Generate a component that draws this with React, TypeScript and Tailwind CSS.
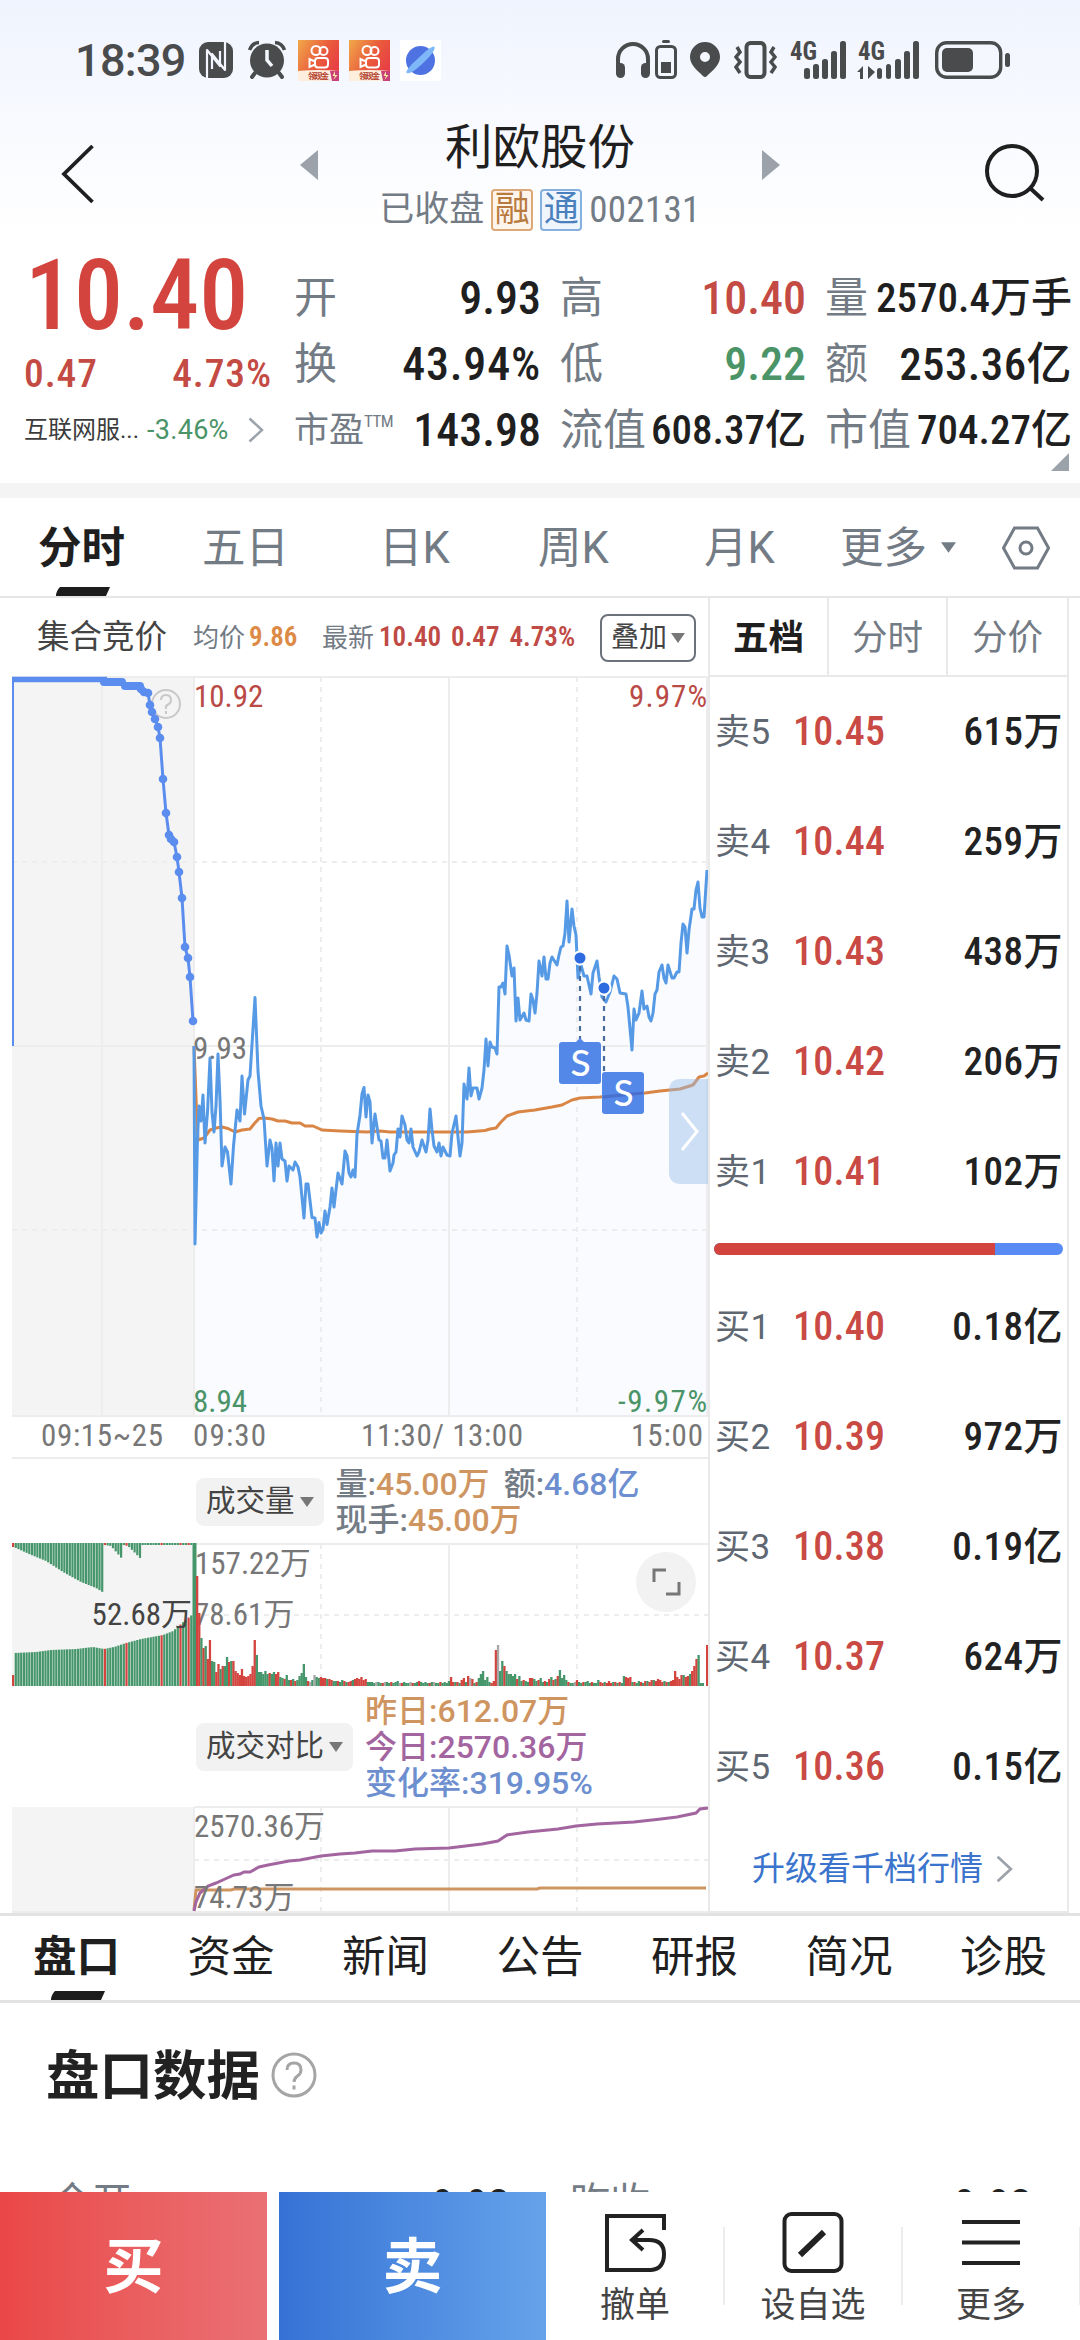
import clsx from "clsx";
import type { ReactNode } from "react";

type Point = [number, number];

const toPath = (points: Point[]) => "M" + points.map((p) => p.join(" ")).join("L");

const PRICE: Point[] = [
  [194, 1046], [195, 1244], [197.5, 1138], [199, 1106], [201, 1121], [203, 1095], [205, 1143], [207.5, 1112],
  [210, 1058], [212, 1112], [214, 1132], [216, 1106], [218, 1054], [220, 1100], [222, 1166], [225, 1147],
  [227.5, 1152], [231, 1184], [233.5, 1146], [237, 1110], [240, 1121], [242, 1076], [244.5, 1114], [248, 1080],
  [250, 1076], [255, 997.5], [258, 1071], [261, 1106], [264, 1119], [267, 1166], [270, 1140], [272, 1148],
  [274, 1181], [276, 1143], [278, 1166], [280, 1143], [282, 1159], [285, 1161], [287, 1181], [289, 1166],
  [293, 1170], [295, 1162], [298, 1167], [300, 1177], [304, 1218], [306, 1184], [308, 1184], [312, 1217.5],
  [315, 1218], [317, 1237], [319, 1222.5], [321, 1233], [323, 1229], [325, 1211], [327, 1224.5], [330, 1207],
  [332, 1188], [334, 1207], [338, 1173], [342, 1184], [345, 1151], [347, 1155.5], [349, 1173], [351, 1177],
  [353, 1170], [355, 1177], [357, 1134.5], [360, 1115], [362, 1094], [364, 1087.5], [366, 1117], [368, 1095],
  [370, 1102], [372, 1143], [375, 1114], [379, 1140], [381, 1141], [383, 1158], [385, 1158], [387, 1140],
  [390, 1171], [393, 1163], [394, 1155], [396, 1152], [398, 1129], [400, 1137], [402, 1116], [405, 1125],
  [407, 1140], [409, 1143], [411, 1129], [413, 1147], [417, 1156], [419, 1152], [422, 1140], [426, 1152],
  [428, 1140], [430, 1109], [432, 1130], [434, 1146], [437, 1152], [439, 1143], [441, 1156], [443, 1147],
  [447, 1155], [450, 1156], [452, 1133], [456, 1116], [458, 1137], [460, 1156], [462, 1143], [464, 1084],
  [467, 1099], [469, 1068], [471, 1096], [473, 1088], [477, 1088], [479, 1099], [482, 1088], [484, 1070],
  [486, 1039], [488, 1066], [490, 1042], [492, 1047], [495, 1048], [497, 1054], [499, 987], [501, 987],
  [503, 983], [505, 994], [507, 946], [509, 955], [512, 976], [514, 968], [516, 1021], [518, 998],
  [520, 1020], [524, 1013], [526, 1020], [529, 1021], [531, 994], [533, 1000], [535, 1013], [537, 993],
  [539, 961], [542, 976], [544, 957], [546, 979], [548, 979], [550, 963], [552, 957], [557, 965],
  [559, 955], [561, 947], [563, 946], [565, 933], [567, 901], [569, 942], [572, 909], [574, 926],
  [576, 935], [578, 978], [581, 965], [584, 976], [587, 976], [591, 994], [593, 973], [597, 961],
  [599, 977], [602, 997], [606, 1002], [610, 992], [614, 976], [617, 979], [620, 993], [626, 994],
  [628, 1007], [632, 1050], [634, 1009], [636, 1020], [639, 1013], [642, 991], [644, 1009], [647, 1006],
  [649, 1017], [651, 1021], [653, 1013], [655, 994], [657, 990], [659, 972], [662, 965], [664, 978],
  [666, 983], [668, 965], [672, 978], [674, 978], [677, 972], [679, 972], [681, 943], [683, 924],
  [685, 927], [687, 953], [689, 930], [692, 909], [694, 909], [696, 890], [698, 882], [700, 908],
  [702, 917], [704, 917], [707, 870],
];

const AVERAGE: Point[] = [
  [194, 1046], [196.5, 1110], [198, 1140], [204, 1138], [210, 1130], [216, 1128], [222, 1127], [228, 1128.5],
  [235, 1132], [242, 1130], [250, 1129], [254, 1124], [259, 1118.5], [264, 1118], [272, 1119], [278, 1121],
  [285, 1121], [292, 1123], [300, 1123], [305, 1126], [313, 1126], [322, 1130], [340, 1131], [367, 1132],
  [380, 1131], [390, 1132], [467, 1132], [485, 1130.5], [490, 1129], [496, 1128], [501, 1122], [507, 1116],
  [518, 1112], [535, 1110], [552, 1107], [562, 1105], [572, 1100], [580, 1098], [600, 1097], [620, 1095],
  [645, 1093], [660, 1091], [680, 1089], [693, 1085], [699, 1077], [704, 1076], [708, 1073],
];

const AUCTION: Point[] = [
  [141, 689], [144, 692], [148, 693], [150, 705], [152, 712], [155, 719], [158, 727], [160, 738],
  [163, 779], [166, 813], [169, 835], [171, 839], [174, 842], [177, 857], [179, 872], [182, 898],
  [185, 947], [188, 958], [190, 977], [193, 1021],
];

const TODAY: Point[] = [
  [194, 1911], [196, 1902], [200, 1893], [208, 1886], [216, 1883], [225, 1879], [234, 1875], [240, 1874],
  [244, 1872], [250, 1872], [259, 1867], [268, 1865], [289, 1861], [300, 1860], [321, 1856], [340, 1854],
  [355, 1853], [372, 1851], [395, 1851], [415, 1849], [449, 1848], [482, 1844], [498, 1841], [507, 1835],
  [528, 1832], [558, 1829], [576, 1826], [597, 1824], [634, 1822], [661, 1819], [677, 1817], [696, 1813],
  [700, 1809], [708, 1808],
];

const YESTERDAY: Point[] = [
  [194, 1910], [196, 1890], [231, 1890], [234, 1889], [537, 1889], [540, 1888], [706, 1888],
];

// one entry per traded minute: height, then g / r / n for the colour
const VOLUME =
  "110r 73r 48g 38r 40g 27r 46r 25g 24g 14r 22r 17g 20r 20g 29g 24r 25g 25r 15r 13r 11r 17r 10r 9r 10r 12r 20r 46r 31g 14g 14g 12g 15g 12g 13r 12g 14g 12r 14r 9g 8g 7r 11g 6g 6r 7g 5r 6g 10g 13g 22g 9g 5r 4n 6g 11n 9g 8g 9r 8r 8r 7g 7r 6r 5g 5g 5r 4g 6g 5r 4g 4r 5r 6g 7r 8r 7r 9r 6r 7r 4g 4g 4g 3g 4n 4g 3g 3r 4n 4g 3g 4r 3g 4g 5g 3n 3r 4g 3g 3g 4n 3r 3g 4g 5r 4g 3g 4g 3g 3r 4g 4n 3g 3g 4r 3g 4g 3g 5g 9r 4r 4g 4r 3g 6r 8r 4g 10r 8n 7r 3g 4r 8g 12g 15g 6g 9g 4g 3r 5r 36r 41n 15g 25g 20r 15g 12g 12g 10g 12g 7r 10g 5g 6r 5g 4g 8r 8r 7g 5g 6r 8g 4g 5r 4g 7r 9g 6r 7g 10r 16g 8g 11g 6g 4r 3g 3g 4n 6r 4g 3g 4r 4g 5g 3g 4r 3g 3g 6g 4r 3r 4g 3r 5r 3r 4g 4r 3g 4r 3g 10g 9r 8r 9r 4g 4r 3g 5g 4r 3g 5r 5g 4r 6r 6g 5r 7r 6r 4r 5g 4r 4g 5r 6r 15r 9r 7r 11r 11g 9r 10r 12g 15r 20r 27r 31g 3g 3g 0g 41r"
    .split(" ")
    .map((v, i, all) => ({ x: 196 + (i * 510) / (all.length - 1), h: parseInt(v, 10), tone: v.slice(-1) }));

const lerp = (points: Point[], x: number) => {
  const i = Math.max(1, points.findIndex((p) => p[0] >= x));
  const [x0, y0] = points[i - 1];
  const [x1, y1] = points[i];
  return y0 + ((y1 - y0) * (x - x0)) / (x1 - x0);
};

const AUCTION_TOP: Point[] = [
  [12, 1547], [15, 1548], [28, 1554], [45, 1561], [62, 1572], [80, 1582], [95, 1588], [103, 1593], [103.5, 1545],
  [110, 1546], [122, 1560], [122.5, 1545], [127, 1546], [139, 1558], [139.5, 1545], [192, 1545],
];
const AUCTION_BASE: Point[] = [
  [12, 1675], [13, 1653], [35, 1652], [50, 1650], [75, 1649], [92, 1647], [103, 1649], [113, 1647], [125, 1643],
  [140, 1639], [162, 1635], [172, 1631], [180, 1624], [187, 1618], [192, 1614],
];
const AUCTION_BARS = Array.from({ length: 67 }, (_, i) => {
  const x = 12 + i * 2.7;
  return { x, top: lerp(AUCTION_TOP, x), base: lerp(AUCTION_BASE, x), red: [0, 34, 42, 55, 62, 65].includes(i) };
});

const SELLS = [
  ["卖5", "10.45", "615万"],
  ["卖4", "10.44", "259万"],
  ["卖3", "10.43", "438万"],
  ["卖2", "10.42", "206万"],
  ["卖1", "10.41", "102万"],
];
const BUYS = [
  ["买1", "10.40", "0.18亿"],
  ["买2", "10.39", "972万"],
  ["买3", "10.38", "0.19亿"],
  ["买4", "10.37", "624万"],
  ["买5", "10.36", "0.15亿"],
];

function Caret({ className }: { className?: string }) {
  return (
    <svg viewBox="0 0 14 10" className={clsx("h-2.5 w-3.5 fill-current", className)}>
      <path d="M0 0H14L7 10Z" />
    </svg>
  );
}

function ChevronRight({ className }: { className?: string }) {
  return (
    <svg viewBox="0 0 16 26" fill="none" stroke="currentColor" strokeWidth="2.5" className={className}>
      <path d="M1.5 1.5L14 13L1.5 24.5" />
    </svg>
  );
}

function AppBadge() {
  return (
    <svg viewBox="0 0 41 41" className="h-[41px] w-[41px] overflow-visible">
      <defs>
        <linearGradient id="badge" x1="0" y1="0" x2="1" y2="0.6">
          <stop offset="0" stopColor="#f0a94a" />
          <stop offset="0.6" stopColor="#ea5a3c" />
          <stop offset="1" stopColor="#e73f45" />
        </linearGradient>
      </defs>
      <path d="M0 0H41V41H0Z" fill="url(#badge)" />
      <g fill="none" stroke="#fff" strokeWidth="2">
        <circle cx="18" cy="10.5" r="4.5" />
        <circle cx="25.5" cy="11" r="4" />
        <rect x="17" y="18" width="13" height="9.5" rx="3" />
        <path d="M17 21.5L11.5 19V27L17 24.5" />
      </g>
      <path d="M0 31Q20 29 41 31V41H0Z" fill="#fdeedd" />
      <path d="M32 31H41V41H34Z" fill="#c8407a" />
      <path d="M37 31L34.5 36H37L35.5 40L39.5 35H37Z" fill="#ffe9a0" />
      <text x="10" y="39" fontSize="8" fontWeight="700" fill="#b3402c" textLength="21">
        领现金
      </text>
    </svg>
  );
}

function StatusBar() {
  return (
    <div className="flex h-[120px] items-center pl-[75px] text-[#4a4b4d]">
      <span className="w-[124px] text-[45px] leading-none font-medium tracking-[-0.7px] font-stretch-[100%]">18:39</span>
      <svg viewBox="0 0 34 36" className="h-9 w-[34px]">
        <rect width="34" height="36" rx="9" fill="currentColor" />
        <g fill="none" stroke="#f3f6fe" strokeWidth="2.2" strokeLinejoin="round">
          <path d="M8 36V8L21 24V9" />
          <path d="M26 0V28L13 12V27" />
        </g>
      </svg>
      <svg viewBox="0 0 38 38" className="ml-[15px] h-[38px] w-[38px] overflow-visible">
        <circle cx="19" cy="19.5" r="17" fill="currentColor" />
        <path d="M1.500 9Q4 2 11 1.500M36.500 9Q34 2 27 1.500" fill="none" stroke="currentColor" strokeWidth="3.500" />
        <path d="M7 32L4 36M31 32L34 36" stroke="currentColor" strokeWidth="4" strokeLinecap="round" />
        <path d="M19 9V19L24 25" fill="none" stroke="#f4f7fe" strokeWidth="3.5" />
      </svg>
      <div className="ml-[12px] flex gap-[10px]">
        <AppBadge />
        <AppBadge />
        <svg viewBox="0 0 41 41" className="h-[41px] w-[41px]">
          <path d="M0 0H41V41H0Z" fill="#fff" />
          <circle cx="20.500" cy="20.500" r="14.500" fill="#4f72e2" />
          <path d="M7 33Q4 33 12 24L26 11Q36 3 34.500 9Q33 14 21 25Q10 35 7 33Z" fill="#7fb8f8" />
        </svg>
      </div>
      <div className="ml-[174px] flex items-center">
        <svg viewBox="0 0 64 40" className="h-10 w-16" fill="none" stroke="currentColor">
          <path d="M3 27V19A15 15 0 0 1 33 19V27" strokeWidth="4" />
          <rect x="1" y="23" width="9" height="15" rx="4.500" fill="currentColor" stroke="none" />
          <rect x="26" y="23" width="9" height="15" rx="4.500" fill="currentColor" stroke="none" />
          <rect x="41.500" y="6.500" width="19" height="31" rx="4" strokeWidth="3" />
          <rect x="47" y="0" width="8" height="3" rx="1.500" fill="currentColor" stroke="none" />
          <rect x="46" y="22" width="10" height="11" fill="currentColor" stroke="none" />
        </svg>
        <svg viewBox="0 0 30 36" className="ml-[11px] h-9 w-[30px]" fill="currentColor">
          <path
            fillRule="evenodd"
            d="M15 0A15 15 0 0 1 30 15C30 23 22 29 17 34Q15 36 13 34C8 29 0 23 0 15A15 15 0 0 1 15 0ZM15 10A5 5 0 1 0 15 20A5 5 0 0 0 15 10Z"
          />
        </svg>
        <svg viewBox="0 0 43 38" className="ml-[14px] h-[38px] w-[43px]" fill="none" stroke="currentColor" strokeWidth="3.5">
          <rect x="12.500" y="2" width="18" height="34" rx="4" strokeWidth="4" />
          <path d="M3 6L6 11L2 16L6 21L2 26L6 32M40 6L37 11L41 16L37 21L41 26L37 32" />
        </svg>
        <svg viewBox="0 0 130 38" className="ml-[13px] h-[38px] w-[130px] overflow-visible" fill="currentColor">
          <text x="0" y="19" fontSize="26" fontWeight="700" textLength="27" lengthAdjust="spacingAndGlyphs">4G</text>
          <rect x="14" y="27" width="6" height="11" rx="2.500" />
          <rect x="23" y="23" width="6" height="15" rx="2.500" />
          <rect x="32" y="18" width="6" height="20" rx="2.500" />
          <rect x="41" y="10" width="6" height="28" rx="2.500" />
          <rect x="50" y="0" width="6" height="38" rx="2.500" />
          <text x="68" y="19" fontSize="26" fontWeight="700" textLength="27" lengthAdjust="spacingAndGlyphs">4G</text>
          <path d="M67 31L73 25V38H70V31ZM78 25L85 31L78 38Z" />
          <rect x="87" y="27" width="5" height="11" rx="2.500" />
          <rect x="96" y="23" width="5" height="15" rx="2.500" />
          <rect x="105" y="18" width="6" height="20" rx="2.500" />
          <rect x="114" y="10" width="6" height="28" rx="2.500" />
          <rect x="123" y="0" width="6" height="38" rx="2.500" />
        </svg>
        <svg viewBox="0 0 76 38" className="ml-[15px] h-[38px] w-[76px]">
          <rect x="1.700" y="1.700" width="64" height="34.600" rx="10" fill="none" stroke="currentColor" strokeWidth="3.400" />
          <rect x="7" y="7" width="31" height="24" rx="5" fill="currentColor" />
          <rect x="70" y="12" width="5" height="14" rx="2.500" fill="currentColor" />
        </svg>
      </div>
    </div>
  );
}

function Header() {
  return (
    <header className="flex h-[115px] items-start text-[#1f1f1f]">
      <svg viewBox="0 0 34 60" className="mt-6 ml-[61px] h-[60px] w-[34px]" fill="none" stroke="currentColor" strokeWidth="3.800">
        <path d="M31.500 2L3 30L31.500 58" />
      </svg>
      <svg viewBox="0 0 18 30" className="mt-[30px] ml-[205px] h-[30px] w-[18px] fill-[#9ba2aa]">
        <path d="M18 0V30L0 15Z" />
      </svg>
      <div className="flex w-[444px] flex-col items-center">
        <h1 className="mt-[4px] text-[47.500px] leading-[48px]">利欧股份</h1>
        <div className="mt-[17px] flex items-center gap-[7px] text-[35px] leading-[42px] text-[#737b85]">
          <span>已收盘</span>
          <span className="size-[42px] rounded border-2 border-[#dca878] bg-[#fdf5ec] text-center leading-[37px] text-[#b97a3f]">融</span>
          <span className="size-[42px] rounded border-2 border-[#86b0de] bg-[#eef5fd] text-center leading-[37px] text-[#4a80bd]">通</span>
          <span className="text-[37px] tracking-[0.3px]">002131</span>
        </div>
      </div>
      <svg viewBox="0 0 18 30" className="mt-[30px] h-[30px] w-[18px] fill-[#9ba2aa]">
        <path d="M0 0V30L18 15Z" />
      </svg>
      <svg viewBox="0 0 62 60" className="mt-[23px] ml-[204px] h-[60px] w-[62px]" fill="none" stroke="currentColor" strokeWidth="4">
        <circle cx="28" cy="28" r="25" />
        <path d="M46 45L59 57" />
      </svg>
    </header>
  );
}

function Stat({ label, value, className }: { label: ReactNode; value: string; className?: string }) {
  return (
    <div className="flex h-[66px] items-center justify-between leading-none whitespace-nowrap">
      <span className="text-[43px] text-[#737b85]">{label}</span>
      <span className={clsx("font-medium", className)}>{value}</span>
    </div>
  );
}

function Quote() {
  return (
    <section className="relative flex h-[248px]">
      <div className="ml-6 w-[248px]">
        <div className="mt-[12px] ml-px text-[98px] leading-[98px] font-medium text-[#d2443d]">10.40</div>
        <div className="mt-[9px] flex justify-between text-[39.500px] leading-[40px] font-medium tracking-[0.9px] text-[#c44a44]">
          <span>0.47</span>
          <span>4.73%</span>
        </div>
        <div className="mt-[24px] flex h-6 items-center text-2xl leading-none whitespace-nowrap">
          <span className="w-[123px] text-[#3c3c3c]">互联网服...</span>
          <span className="text-[27px] tracking-[0.3px] text-[#4a9468] font-stretch-[95%]">-3.46%</span>
          <ChevronRight className="mr-[8px] ml-auto h-[26px] w-4 text-[#9ba2aa]" />
        </div>
      </div>
      <div className="mt-[30px] ml-[22px] w-[247px]">
        <Stat label="开" value="9.93" className="text-[46px]" />
        <Stat label="换" value="43.94%" className="text-[46px] tracking-[0.8px]" />
        <Stat
          label={<span className="flex items-start text-[35px]">市盈<small className="text-[17px] leading-4 tracking-[-0.5px]">TTM</small></span>}
          value="143.98"
          className="text-[46px]"
        />
      </div>
      <div className="mt-[30px] ml-[19px] w-[246px]">
        <Stat label="高" value="10.40" className="text-[46px] text-[#c44a44]" />
        <Stat label="低" value="9.22" className="text-[46px] text-[#4a9468]" />
        <Stat label="流值" value="608.37亿" className="text-[41px]" />
      </div>
      <div className="mt-[30px] ml-[19px] w-[247px]">
        <Stat label="量" value="2570.4万手" className="text-[41px]" />
        <Stat label="额" value="253.36亿" className="text-[45px] tracking-[0.4px]" />
        <Stat label="市值" value="704.27亿" className="text-[41px]" />
      </div>
      <svg viewBox="0 0 18 18" className="absolute right-[11px] bottom-[12px] size-[18px] fill-[#9ba2aa]">
        <path d="M18 0V18H0Z" />
      </svg>
    </section>
  );
}

function Underline() {
  return (
    <svg viewBox="0 0 54 9" className="absolute bottom-0 left-[18px] h-[9px] w-[54px] fill-[#1c1c1c]">
      <path d="M4 0H54L50 9H0Q0 4 4 0Z" />
    </svg>
  );
}

function PeriodTabs() {
  return (
    <nav className="flex h-[100px] items-center border-b-2 border-[#e6e6e6] pt-[4px] pl-[38px] text-[43.500px] leading-none text-[#737b85] font-stretch-[100%]">
      <span className="relative flex h-full w-[164px] items-center font-bold text-[#1f1f1f]">
        分时
        <Underline />
      </span>
      <span className="w-[177px]">五日</span>
      <span className="w-[159px]">日K</span>
      <span className="w-[166px]">周K</span>
      <span className="w-[136px]">月K</span>
      <span>更多</span>
      <Caret className="mb-[3px] ml-[14px] h-[13px] w-[15px]" />
      <svg viewBox="0 0 48 44" className="mb-[3px] ml-[46px] h-11 w-12" fill="none" stroke="currentColor" strokeWidth="3">
        <path d="M12.500 2H35.500L46.500 22L35.500 42H12.500L1.500 22Z" />
        <circle cx="24" cy="22" r="6" />
      </svg>
    </nav>
  );
}

function ChartLegend() {
  return (
    <div className="flex h-[78px] items-center pt-px pl-[25px] leading-none whitespace-nowrap">
      <span className="w-[156px] text-[32.500px] text-[#444]">集合竞价</span>
      <span className="text-[26px] text-[#737b85]">均价</span>
      <span className="ml-[4px] w-[73px] text-[27px] font-semibold text-[#dd8a46]">9.86</span>
      <span className="text-[26px] text-[#737b85]">最新</span>
      <div className="ml-[5px] flex gap-[10px] text-[27px] font-semibold text-[#c04a45]">
        <span>10.40</span>
        <span>0.47</span>
        <span>4.73%</span>
      </div>
      <button className="mr-[12px] ml-auto flex h-12 w-[96px] items-center justify-center gap-1 rounded-lg border-2 border-[#6b727a] text-[28px] text-[#444]">
        叠加
        <Caret className="text-[#777]" />
      </button>
    </div>
  );
}

function PriceChart() {
  return (
    <svg viewBox="12 676 697 781" className="block h-[781px] w-[697px]">
      <path d="M12 677H194V1416H12Z" fill="#f4f4f4" />
      <path d={`${toPath(PRICE)}V1416H194Z`} fill="#f9fbfe" />
      <g stroke="#ededee" strokeWidth="2" fill="none">
        <path d="M12 677H708M12 1046H708M12 1416H708M102 677V1416M194 677V1416M449 677V1416M707 677V1416" />
        <path d="M321 677V1416M577 677V1416M12 862H708M12 1230H708" strokeDasharray="5 5" />
      </g>
      <g fill="none" stroke="#c8c8c8" strokeWidth="2">
        <circle cx="166" cy="704" r="14" />
        <path d="M161 700Q161 695 166 695T171 700Q171 703 168 704.500T166 709M166 711V714" />
      </g>
      <g fill="none" stroke="#5b8def" strokeLinejoin="round" strokeLinecap="round">
        <path d="M13 1046V679" strokeWidth="2" strokeLinecap="butt" />
        <path d="M12 679.500H107" strokeWidth="5.500" strokeLinecap="butt" />
        <path d="M104 682H122M125 686H140" strokeWidth="8" />
        <path d={toPath([[138, 687], ...AUCTION])} strokeWidth="3" />
      </g>
      {AUCTION.map(([x, y]) => (
        <circle key={y} cx={x} cy={y} r="4.300" fill="#5b8def" />
      ))}
      <g fontSize="31" fill="#777">
        <text x="194" y="707" fill="#b94a46">10.92</text>
        <text x="707" y="707" fill="#b94a46" textAnchor="end" textLength="78">9.97%</text>
        <text x="193" y="1059">9.93</text>
        <text x="193" y="1412" fill="#4a9468">8.94</text>
        <text x="707" y="1412" fill="#4a9468" textAnchor="end" textLength="89">-9.97%</text>
        <text x="41" y="1446" textLength="122">09:15~25</text>
        <text x="193" y="1446" textLength="73">09:30</text>
        <text x="361" y="1446" textLength="162">11:30/ 13:00</text>
        <text x="703" y="1446" textAnchor="end" textLength="72">15:00</text>
      </g>
      <path d={toPath(AVERAGE)} fill="none" stroke="#d98546" strokeWidth="3" strokeLinejoin="round" />
      <path d={toPath(PRICE)} fill="none" stroke="#569ae6" strokeWidth="3" strokeLinejoin="round" />
      <path d="M580 966V1040M604 996V1072" stroke="#4a6c9c" strokeWidth="2.200" strokeDasharray="5 5" />
      <circle cx="580" cy="958" r="6.500" fill="#2f6be0" stroke="#fff" strokeWidth="2" />
      <circle cx="604" cy="988" r="6.500" fill="#2f6be0" stroke="#fff" strokeWidth="2" />
      <path d="M575 1043L580 1038L585 1043Z" fill="#5488e8" />
      <rect x="559" y="1042" width="42" height="42" rx="3" fill="#5488e8" />
      <rect x="602" y="1072" width="42" height="42" rx="3" fill="#5488e8" />
      <path d="M603 1097L643 1093" stroke="#4a6fcc" strokeWidth="3" />
      <g fontSize="37" fontWeight="500" fill="#fff" textAnchor="middle" fontFamily="Lato">
        <text x="580.500" y="1076">S</text>
        <text x="623.500" y="1106">S</text>
      </g>
      <path d="M709 1079H681Q669 1079 669 1091V1172Q669 1184 681 1184H709Z" fill="#96bdec" fillOpacity="0.45" />
      <path d="M682 1113L697 1131.500L682 1150" fill="none" stroke="#fff" strokeWidth="3" />
    </svg>
  );
}

const TONES: Record<string, string> = { g: "#46966b", r: "#d2443d", n: "#a8a8a8" };

function VolumeChart() {
  return (
    <svg viewBox="12 1543 697 143" className="block h-[143px] w-[697px]">
      <path d="M12 1543H194V1686H12Z" fill="#f4f4f4" />
      <g stroke="#ededee" strokeWidth="2" fill="none">
        <path d="M12 1544H708M449 1544V1686" />
        <path d="M321 1544V1686M577 1544V1686M194 1615H708" strokeDasharray="5 5" />
      </g>
      <g fontSize="31" fill="#777">
        <text x="195" y="1574">157.22万</text>
        <text x="194" y="1625">78.61万</text>
      </g>
      {AUCTION_BARS.map((bar) => (
        <g key={bar.x} fill={bar.red ? TONES.r : TONES.g}>
          <rect x={bar.x} y="1543" width="2.200" height={bar.top - 1543} />
          <rect x={bar.x} y={bar.base} width="2.200" height={1686 - bar.base} />
        </g>
      ))}
      <path d="M192.500 1543H196.500V1686H192.500Z" fill={TONES.g} />
      {VOLUME.map((bar) => (
        <rect key={bar.x} x={bar.x} y={1686 - bar.h} width="2.300" height={bar.h} fill={TONES[bar.tone]} />
      ))}
      <text x="192" y="1625" fontSize="31" fill="#444" textAnchor="end">52.68万</text>
      <circle cx="666" cy="1582" r="30" fill="#f2f2f2" />
      <path d="M654 1582V1570H666M679 1582V1594H666" fill="none" stroke="#777" strokeWidth="3" />
    </svg>
  );
}

function CompareChart() {
  return (
    <svg viewBox="12 1806 697 107" className="block h-[107px] w-[697px] overflow-visible">
      <path d="M12 1807H194V1912H12Z" fill="#f4f4f4" />
      <g stroke="#ededee" strokeWidth="2" fill="none">
        <path d="M194 1807H708M12 1912H708M194 1807V1912M449 1807V1912" />
        <path d="M321 1807V1912M577 1807V1912M194 1860H708" strokeDasharray="5 5" />
      </g>
      <path d={toPath(YESTERDAY)} fill="none" stroke="#cf9561" strokeWidth="3" />
      <path d={toPath(TODAY)} fill="none" stroke="#a3659f" strokeWidth="3" />
      <g fontSize="31" fill="#777">
        <text x="194" y="1837" textLength="131">2570.36万</text>
        <text x="194" y="1908">74.73万</text>
      </g>
    </svg>
  );
}

function Chip({ children }: { children: ReactNode }) {
  return (
    <span className="ml-[184px] flex h-12 items-center gap-[5px] rounded-lg bg-[#f2f2f2] px-[10px] text-[29.500px] text-[#444]">
      {children}
      <Caret className="text-[#777]" />
    </span>
  );
}

function OrderRow({ row }: { row: string[] }) {
  return (
    <div className="flex h-[110px] items-center pr-[4px] pl-[5px] leading-none">
      <span className="w-[78px] text-[35px] tracking-[0.5px] text-[#5f6872] font-stretch-[95%]">{row[0]}</span>
      <span className="text-[40px] font-medium tracking-[0.2px] text-[#c94a44]">{row[1]}</span>
      <span className="ml-auto text-[39px] font-medium tracking-[0.5px] text-[#222]">{row[2]}</span>
    </div>
  );
}

function OrderBook() {
  return (
    <aside className="flex h-[1315px] w-[361px] shrink-0 flex-col border-x-2 border-b-2 border-[#e9e9e9] text-[#737b85]">
      <div className="grid h-[79px] grid-cols-3 divide-x-2 divide-[#e9e9e9] border-b-2 border-[#e9e9e9] text-[35.500px]">
        <span className="flex items-center justify-center pt-1 font-bold text-[#1f1f1f]">五档</span>
        <span className="flex items-center justify-center pt-1">分时</span>
        <span className="flex items-center justify-center pt-1">分价</span>
      </div>
      {SELLS.map((row) => (
        <OrderRow key={row[0]} row={row} />
      ))}
      <div className="mx-1 mt-[16px] mb-[17px] flex h-3 shrink-0 overflow-hidden rounded-full bg-[#588bf3]">
        <div className="w-[281px] bg-[#d2443d]" />
      </div>
      {BUYS.map((row) => (
        <OrderRow key={row[0]} row={row} />
      ))}
      <div className="flex flex-1 items-center pt-1 pl-[42px] text-[33px] leading-none text-[#3b74cc]">
        升级看千档行情
        <ChevronRight className="ml-[13px] h-7 w-[17px] text-[#9ba2aa]" />
      </div>
    </aside>
  );
}

function InfoTabs() {
  return (
    <nav className="flex h-[90px] items-center border-y-[3px] border-[#e2e2e2] pl-[33px] text-[43.500px] leading-none text-[#1f1f1f]">
      <span className="relative flex h-full w-[154.500px] shrink-0 items-center font-bold">
        盘口
        <Underline />
      </span>
      {["资金", "新闻", "公告", "研报", "简况", "诊股"].map((tab) => (
        <span key={tab} className="w-[154.500px] shrink-0">{tab}</span>
      ))}
    </nav>
  );
}

function Action({ label, children }: { label: string; children: ReactNode }) {
  return (
    <div className="flex w-[176px] shrink-0 flex-col items-center pt-[18px]">
      <svg viewBox="0 0 64 64" className="size-16" fill="none" stroke="#222" strokeWidth="4">
        {children}
      </svg>
      <span className="mt-[14px] text-[35px] leading-9 text-[#444]">{label}</span>
    </div>
  );
}

export default function App() {
  return (
    <div className="h-[2340px] w-[1080px] overflow-hidden bg-white font-['Roboto','Noto_Sans_CJK_SC',sans-serif] text-[#1f1f1f] font-stretch-[87%]">
      <div className="bg-linear-to-b from-[#f0f4fe] to-white">
        <StatusBar />
        <Header />
      </div>
      <Quote />
      <div className="h-[15px] bg-[#f4f4f4]" />
      <PeriodTabs />

      <main className="flex h-[1315px] pl-3">
        <div className="w-[696px] shrink-0">
          <ChartLegend />
          <PriceChart />
          <div className="flex h-[86px] items-center border-t-2 border-[#ededee] pt-px leading-none">
            <Chip>成交量</Chip>
            <div className="ml-[12px] text-[32px] leading-9 font-medium text-[#737b85] font-stretch-[92%]">
              <div>
                量:<span className="mr-[14px] text-[#cf9561]">45.00万</span>额:
                <span className="text-[#6d8fcf]">4.68亿</span>
              </div>
              <div>
                现手:<span className="text-[#cf9561]">45.00万</span>
              </div>
            </div>
          </div>
          <VolumeChart />
          <div className="flex h-[120px] items-center pt-px leading-none">
            <Chip>成交对比</Chip>
            <div className="ml-[12px] text-[32px] leading-9 font-medium font-stretch-[92%]">
              <div className="text-[#cf9561]">昨日:612.07万</div>
              <div className="text-[#a3659f]">今日:2570.36万</div>
              <div className="text-[#6d8fcf]">变化率:319.95%</div>
            </div>
          </div>
          <CompareChart />
        </div>
        <OrderBook />
      </main>

      <InfoTabs />
      <section className="h-[189px] overflow-hidden">
        <h2 className="flex h-[144px] items-center pt-1 pl-[46px] text-[53.500px] leading-none font-bold text-[#222]">
          盘口数据
          <svg viewBox="0 0 46 46" className="mb-[4px] ml-[11px] size-[46px]" fill="none" stroke="#a5a5a5" strokeWidth="3">
            <circle cx="23" cy="23" r="21" />
            <path d="M16 18Q16 11 23 11T30 18Q30 21.500 26.500 24T23 30M23 33.500V37.500" />
          </svg>
        </h2>
        <div className="mt-[32px] flex h-12 text-[40px] leading-[48px] text-[#737b85]">
          <span className="w-[380px] pl-[52px]">今开</span>
          <span className="w-[130px] text-right text-[44px] leading-[54px] font-medium text-[#222]">9.93</span>
          <span className="ml-[60px]">昨收</span>
          <span className="mr-[48px] ml-auto text-[44px] leading-[54px] font-medium text-[#222]">9.93</span>
        </div>
      </section>

      <footer className="flex h-[148px] bg-white">
        <button className="w-[267px] shrink-0 bg-linear-to-r from-[#ea4747] to-[#ea7074] pt-1 text-[60px] font-bold text-white">买</button>
        <button className="ml-3 w-[267px] shrink-0 bg-linear-to-r from-[#3572d5] to-[#66a2ea] pt-1 text-[60px] font-bold text-white">卖</button>
        <div className="ml-px flex flex-1">
          <Action label="撤单">
            <path d="M61 20V6H4V60H48Q61 59 61 44Q61 30 46 30H30" />
            <path d="M40 20L29 30L40 40" />
          </Action>
          <div className="mt-[35px] h-[78px] w-0.5 shrink-0 bg-[#ececec]" />
          <Action label="设自选">
            <rect x="3.500" y="4" width="57" height="57" rx="7" />
            <path d="M19 45L43 22" strokeWidth="6" />
          </Action>
          <div className="mt-[35px] h-[78px] w-0.5 shrink-0 bg-[#ececec]" />
          <Action label="更多">
            <path d="M3 12H61M3 32.500H61M3 53H61" />
          </Action>
          <div className="mt-[35px] h-[78px] w-0.5 shrink-0 bg-[#ececec]" />
        </div>
      </footer>
    </div>
  );
}
